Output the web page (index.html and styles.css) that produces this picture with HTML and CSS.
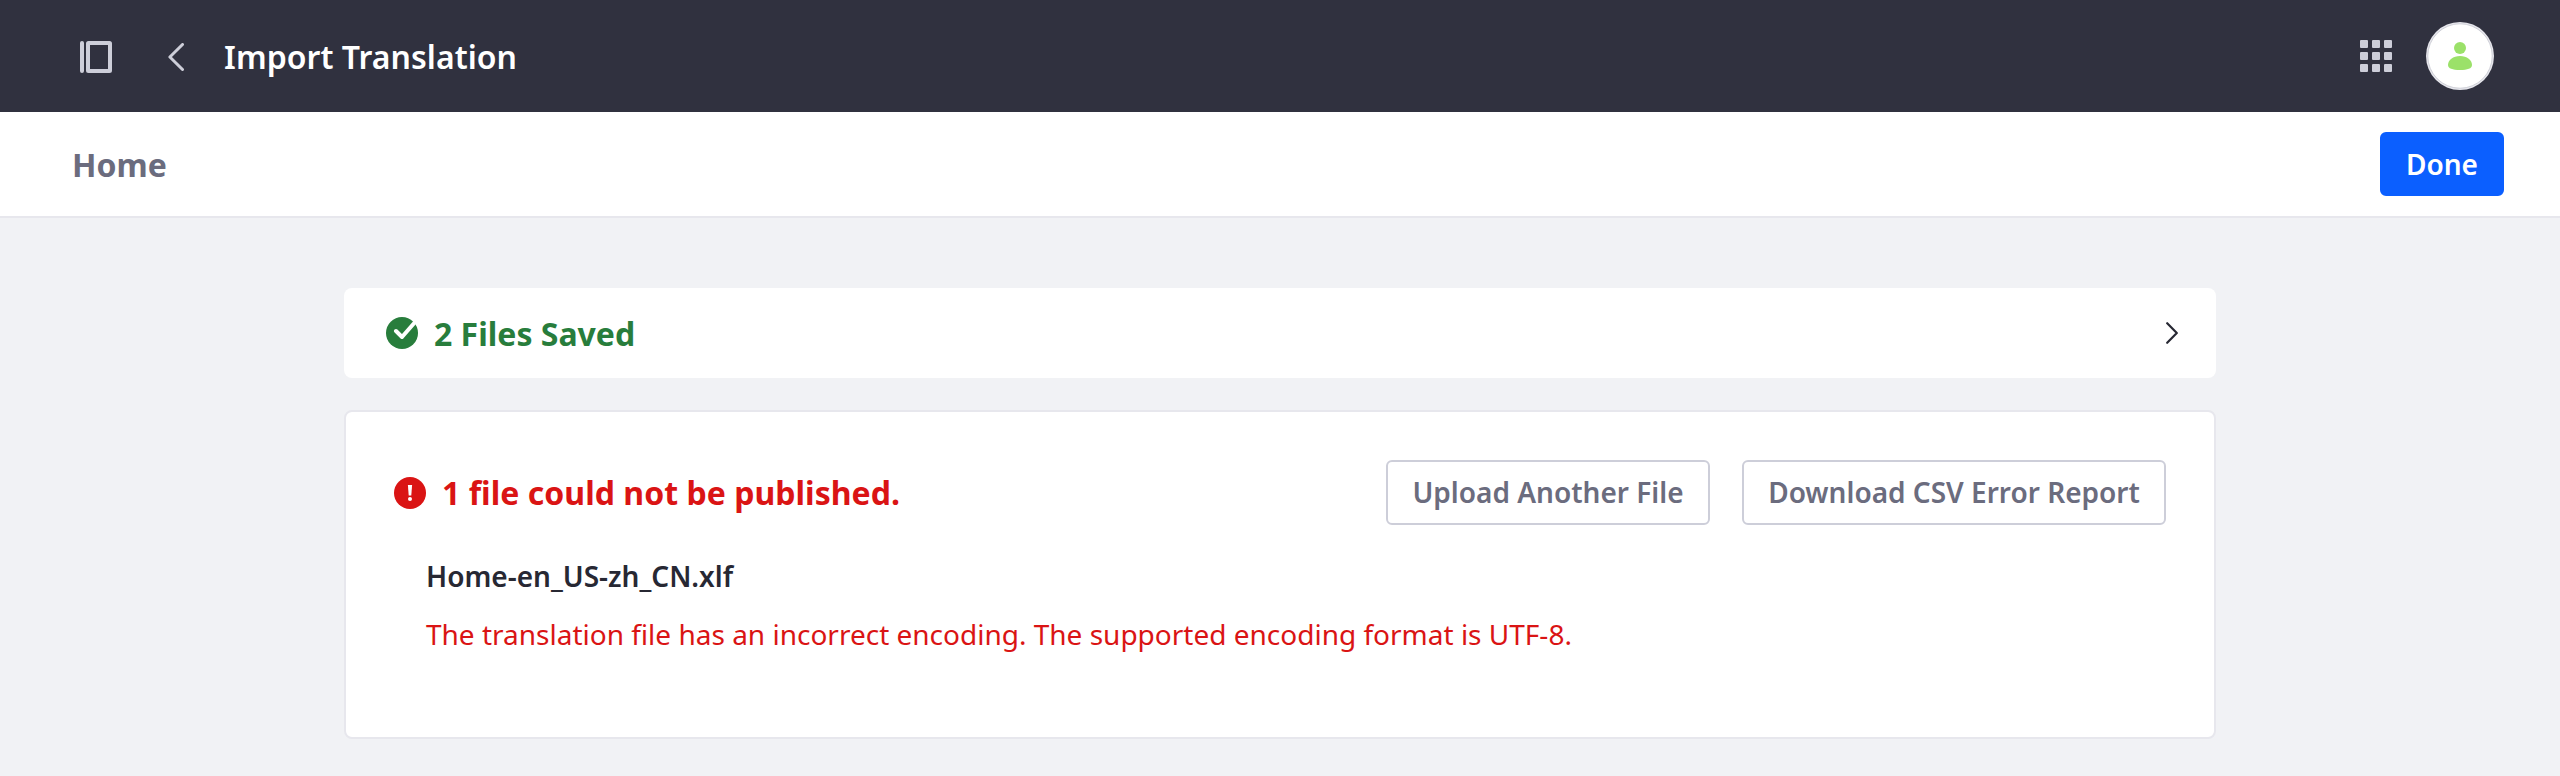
FILE: index.html
```html
<!DOCTYPE html>
<html lang="en">
<head>
<meta charset="utf-8">
<title>Import Translation</title>
<link rel="stylesheet" href="styles.css">
</head>
<body>
<header class="control-menu">
  <svg class="icon" viewBox="0 0 32 32"><rect width="4" height="32" rx="2"/><path fill-rule="evenodd" d="M8.500 0h21A2.500 2.500 0 0 1 32 2.500v27a2.500 2.500 0 0 1-2.500 2.500h-21A2.500 2.500 0 0 1 6 29.500v-27A2.500 2.500 0 0 1 8.500 0zM10 4v24h18V4z"/></svg>
  <svg class="back" viewBox="0 0 16 28"><path d="M14.500 1.500 1.900 14l12.600 12.500"/></svg>
  <h1 class="title">Import Translation</h1>
  <svg class="icon apps" viewBox="0 0 32 32"><rect width="8" height="8" rx="1"/><rect x="12" width="8" height="8" rx="1"/><rect x="24" width="8" height="8" rx="1"/><rect y="12" width="8" height="8" rx="1"/><rect x="12" y="12" width="8" height="8" rx="1"/><rect x="24" y="12" width="8" height="8" rx="1"/><rect y="24" width="8" height="8" rx="1"/><rect x="12" y="24" width="8" height="8" rx="1"/><rect x="24" y="24" width="8" height="8" rx="1"/></svg>
  <span class="avatar"><svg viewBox="0 0 68 68"><circle class="avatar-base" cx="34" cy="34" r="34"/><circle class="avatar-edge" cx="34" cy="34" r="32.200"/><circle cx="34" cy="26" r="6"/><path d="M34 34c7 0 12 4 12 9 0 3.600-4.500 5-12 5s-12-1.400-12-5c0-5 5-9 12-9z"/></svg></span>
</header>
<nav class="toolbar">
  <span class="page-name">Home</span>
  <button class="btn btn-primary">Done</button>
</nav>
<main class="content">
  <section class="panel saved">
    <svg class="status" viewBox="0 0 32 32"><circle cx="16" cy="16" r="16" fill="#287d3c"/><path d="M10 14l6 6L30 4" fill="none" stroke="#fff" stroke-width="4" stroke-linecap="round" stroke-linejoin="round"/></svg>
    <h2 class="heading success">2 Files Saved</h2>
    <svg class="expand" viewBox="0 0 12 22"><path d="M1.200 1.200 10.800 11l-9.600 9.800"/></svg>
  </section>
  <section class="panel failed">
    <div class="failed-head">
      <svg class="status" viewBox="0 0 32 32"><circle cx="16" cy="16" r="16" fill="#da1414"/><path d="M13.900 8h4.200l-.8 10.500h-2.600z" fill="#fff"/><circle cx="16" cy="22" r="2" fill="#fff"/></svg>
      <h2 class="heading danger">1 file could not be published.</h2>
      <button class="btn btn-secondary upload">Upload Another File</button>
      <button class="btn btn-secondary download">Download CSV Error Report</button>
    </div>
    <div class="file">
      <p class="file-name">Home-en_US-zh_CN.xlf</p>
      <p class="file-error">The translation file has an incorrect encoding. The supported encoding format is UTF-8.</p>
    </div>
  </section>
</main>
</body>
</html>
```
FILE: styles.css
```css
* { box-sizing: border-box; }
body {
  margin: 0;
  min-height: 776px;
  background: #f1f2f5;
  color: #272833;
  font: 28px/42px "Noto Sans", sans-serif;
}
h1, h2, p { margin: 0; }
svg { display: block; flex: none; }
.control-menu {
  display: flex;
  align-items: center;
  height: 112px;
  padding: 0 66px 0 80px;
  background: #30313f;
}
.icon { width: 32px; height: 32px; fill: #cdced9; margin-top: 2px; }
.back {
  width: 16px; height: 28px; margin: 2px 40px 0 56px;
  fill: none; stroke: #cdced9; stroke-width: 3; stroke-linecap: round; stroke-linejoin: round;
}
.title { padding-top: 2px; font-size: 32px; line-height: 48px; font-weight: 600; letter-spacing: 0.04px; color: #fff; }
.control-menu .apps { margin: 0 34px 0 auto; }
.avatar svg { width: 68px; height: 68px; fill: #9be169; }
.avatar .avatar-base { fill: #e7e7ed; }
.avatar .avatar-edge { fill: #fff; stroke: #b9bac4; stroke-width: 0.6px; }
.toolbar {
  display: flex;
  align-items: center;
  justify-content: space-between;
  height: 106px;
  padding: 0 56px 0 72px;
  background: #fff;
  border-bottom: 2px solid #e7e7ed;
}
.page-name { padding-top: 2px; font-size: 32px; line-height: 48px; font-weight: 700; color: #6b6c7e; }
.btn {
  height: 64px;
  padding: 0;
  border: 2px solid #cdced9;
  border-radius: 6px;
  font: 600 28px/42px "Noto Sans", sans-serif;
  white-space: nowrap;
}
.btn-primary { width: 124px; background: #0b5fff; border-color: #0b5fff; color: #fff; }
.btn-secondary { height: 65px; padding-bottom: 1px; align-self: flex-start; background: #fff; color: #6b6c7e; }
.content {
  display: flex;
  flex-direction: column;
  gap: 32px;
  width: 1872px;
  margin: 0 auto;
  padding-top: 70px;
}
.panel { background: #fff; border-radius: 8px; }
.saved { display: flex; align-items: center; height: 90px; padding: 2px 38px 0 42px; }
.status { width: 32px; height: 32px; margin-right: 16px; }
.heading { font-size: 32px; line-height: 48px; font-weight: 700; }
.success { color: #287d3c; }
.danger { color: #da1414; letter-spacing: 0.03px; }
.expand {
  width: 12px; height: 22px; margin: -2px 0 0 auto;
  fill: none; stroke: #272833; stroke-width: 2.200; stroke-linecap: round; stroke-linejoin: round;
}
.saved .status { margin-top: -2px; }
.failed { height: 329px; padding: 48px 48px 0; border: 2px solid #e7e7ed; }
.failed-head { display: flex; align-items: center; height: 66px; }
.upload { width: 324px; margin-left: auto; }
.download { width: 424px; margin-left: 32px; }
.file { padding: 29px 32px 0; }
.file-name { font-weight: 600; }
.file-error { margin-top: 16px; color: #da1414; }
```
